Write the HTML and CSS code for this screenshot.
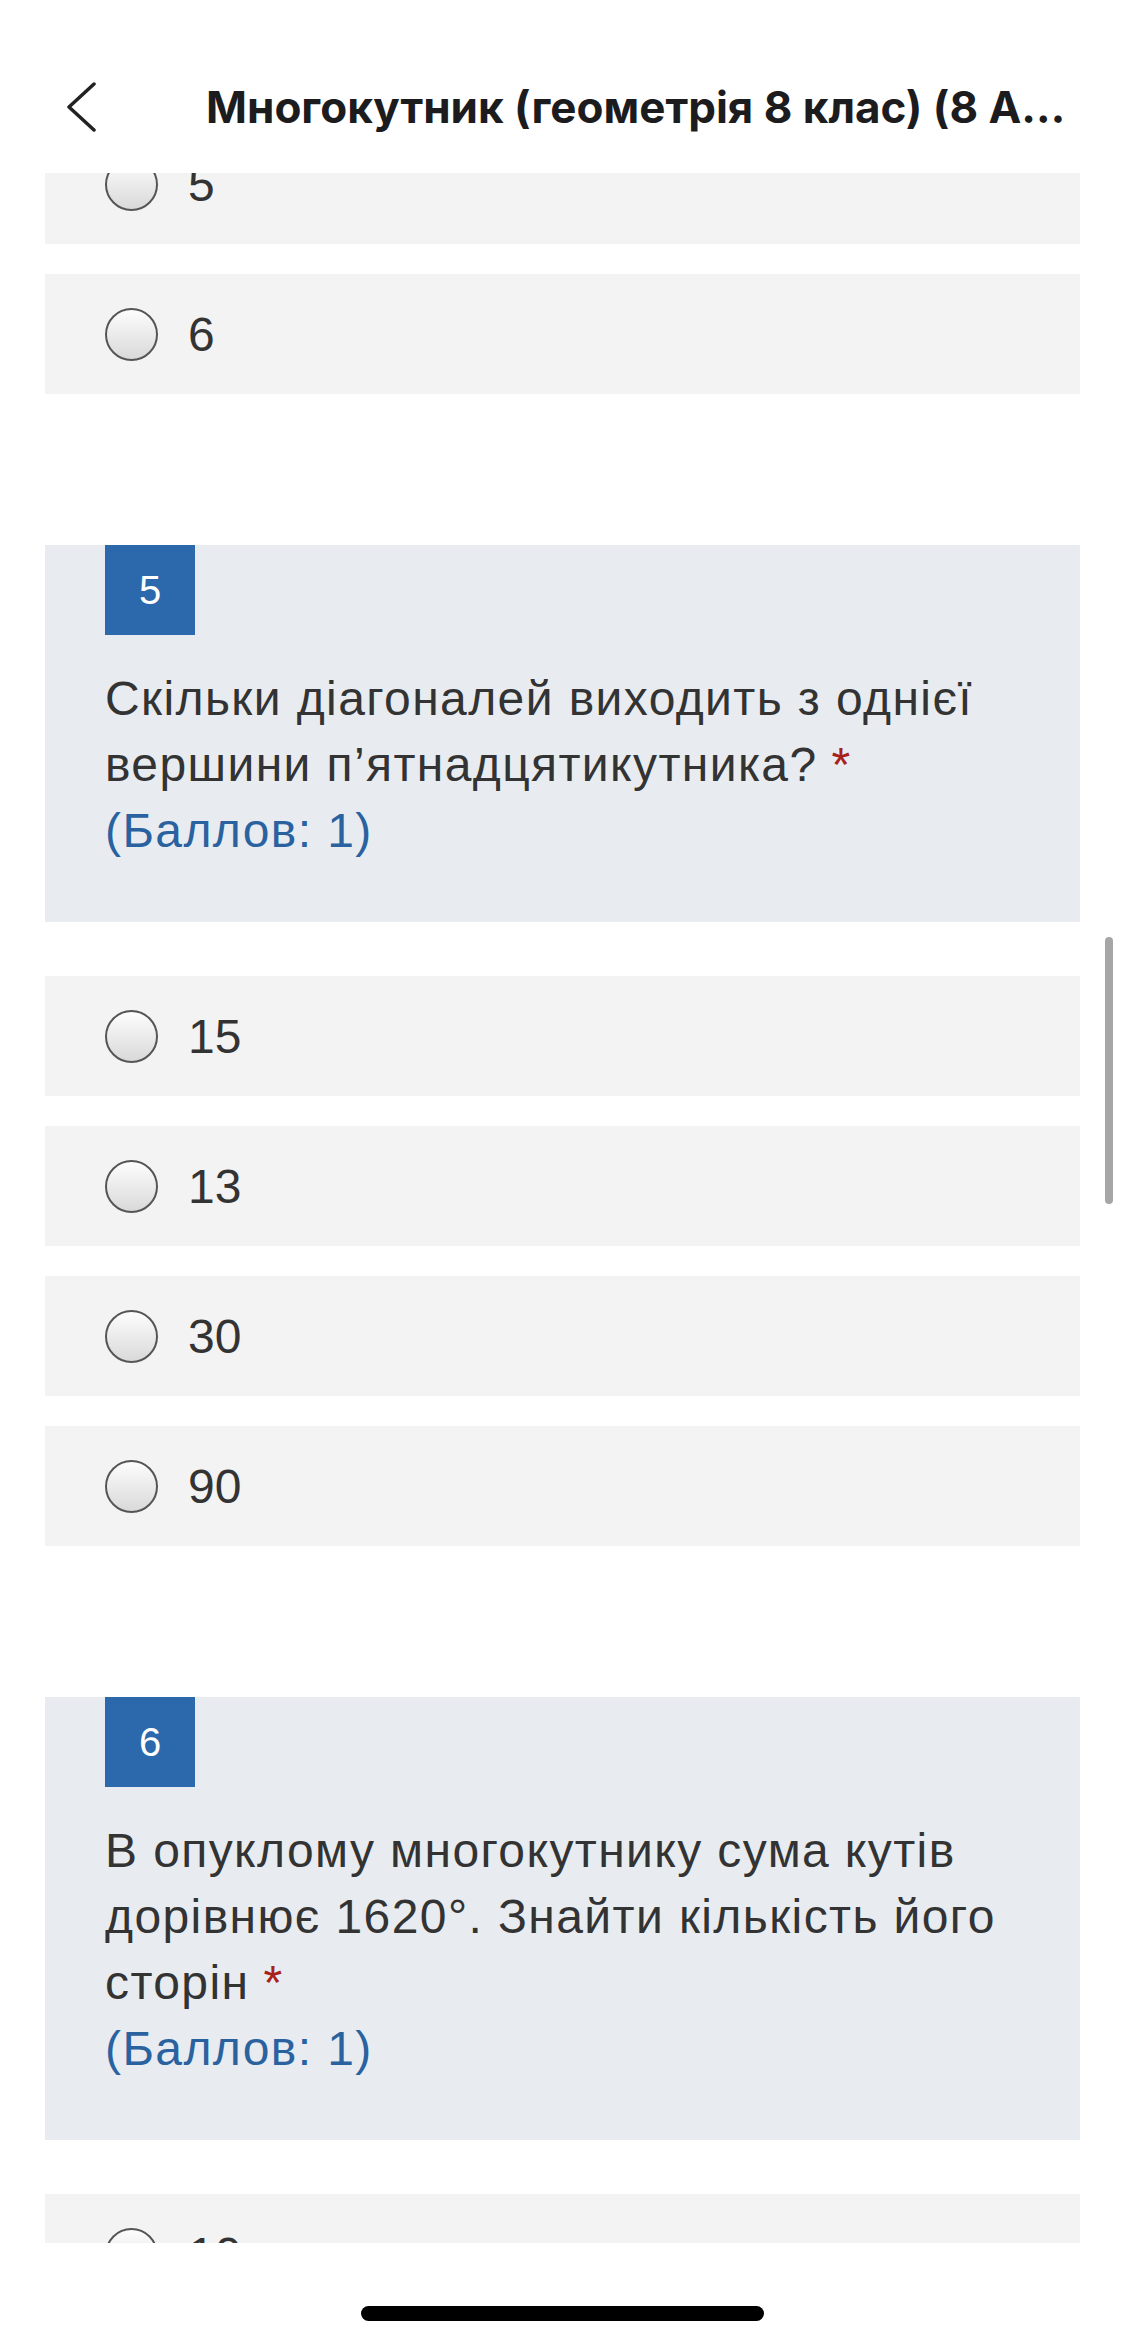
FILE: index.html
```html
<!DOCTYPE html>
<html lang="uk">
<head>
    <meta charset="UTF-8">
    <meta name="viewport" content="width=device-width, initial-scale=1.0">
    <title>Многокутник (геометрія 8 клас)</title>
    <link rel="stylesheet" href="styles.css">
</head>
<body>
    <header class="topbar">
        <button class="back-btn" aria-label="Назад">
            <svg width="30" height="50" viewBox="0 0 30 50">
                <polyline points="27,2 2,25 27,48" fill="none" stroke="#222" stroke-width="3.5" stroke-linecap="round" stroke-linejoin="round"/>
            </svg>
        </button>
        <h1 class="topbar-title">Многокутник (геометрія 8 клас) (8 А…</h1>
    </header>

    <main class="form">
        <label class="option"><span class="radio"></span><span class="option-label">5</span></label>
        <label class="option"><span class="radio"></span><span class="option-label">6</span></label>

        <section class="question">
            <div class="badge">5</div>
            <p class="question-text">Скільки діагоналей виходить з однієї вершини п’ятнадцятикутника?<span class="required">*</span></p>
            <p class="points">(Баллов: 1)</p>
        </section>

        <label class="option"><span class="radio"></span><span class="option-label">15</span></label>
        <label class="option"><span class="radio"></span><span class="option-label">13</span></label>
        <label class="option"><span class="radio"></span><span class="option-label">30</span></label>
        <label class="option"><span class="radio"></span><span class="option-label">90</span></label>

        <section class="question">
            <div class="badge">6</div>
            <p class="question-text">В опуклому многокутнику сума кутів дорівнює 1620°. Знайти кількість його сторін<span class="required">*</span></p>
            <p class="points">(Баллов: 1)</p>
        </section>

        <label class="option"><span class="radio"></span><span class="option-label">10</span></label>
    </main>

    <div class="scroll-thumb"></div>

    <footer class="home-bar">
        <div class="home-indicator"></div>
    </footer>
</body>
</html>
```

FILE: styles.css
```css
html, body {
    overflow: hidden;
}

body {
    margin: 0;
    background: #fff;
    font-family: "Liberation Sans", Arial, sans-serif;
    color: #333;
}

.topbar {
    position: fixed;
    top: 0;
    left: 0;
    right: 0;
    height: 173px;
    background: #fff;
    display: flex;
    align-items: center;
    padding-top: 40px;
    box-sizing: border-box;
    z-index: 10;
}

.back-btn {
    border: none;
    background: none;
    padding: 0;
    margin-left: 67px;
    display: flex;
    cursor: pointer;
}

.topbar-title {
    margin: 0 0 0 109px;
    font-family: Inter, "Noto Sans", sans-serif;
    font-weight: 700;
    font-size: 44px;
    color: #1c1c1e;
    white-space: nowrap;
    overflow: hidden;
}

.form {
    padding: 124px 45px 0;
}

.option {
    display: flex;
    align-items: center;
    height: 120px;
    padding-left: 60px;
    margin-bottom: 30px;
    background: #f3f3f3;
    cursor: pointer;
}

.radio {
    width: 53px;
    height: 53px;
    box-sizing: border-box;
    border: 2.5px solid #555;
    border-radius: 50%;
    background: linear-gradient(#fdfdfd, #d9d9d9);
    flex-shrink: 0;
}

.option-label {
    margin-left: 30px;
    font-size: 48px;
    color: #333;
}

.question {
    background: #e8ecf0;
    padding: 0 60px 58px;
    margin: 151px 0 54px;
}

.badge {
    width: 90px;
    height: 90px;
    background: #2c69ac;
    color: #fff;
    font-size: 40px;
    display: flex;
    align-items: center;
    justify-content: center;
}

.question-text,
.points {
    margin: 0;
    font-size: 48px;
    line-height: 66px;
    letter-spacing: 1.4px;
}

.question-text {
    margin-top: 31px;
    color: #333;
}

.required {
    margin-left: 14px;
    color: #a8201a;
}

.points {
    color: #2a62a0;
}

.scroll-thumb {
    position: fixed;
    top: 937px;
    left: 1105px;
    width: 8px;
    height: 267px;
    border-radius: 4px;
    background: #a6a6a6;
    z-index: 5;
}

.home-bar {
    position: fixed;
    left: 0;
    right: 0;
    bottom: 0;
    height: 102px;
    background: #fff;
    z-index: 10;
}

.home-indicator {
    position: absolute;
    left: 361px;
    top: 63px;
    width: 403px;
    height: 15px;
    border-radius: 8px;
    background: #000;
}
```
